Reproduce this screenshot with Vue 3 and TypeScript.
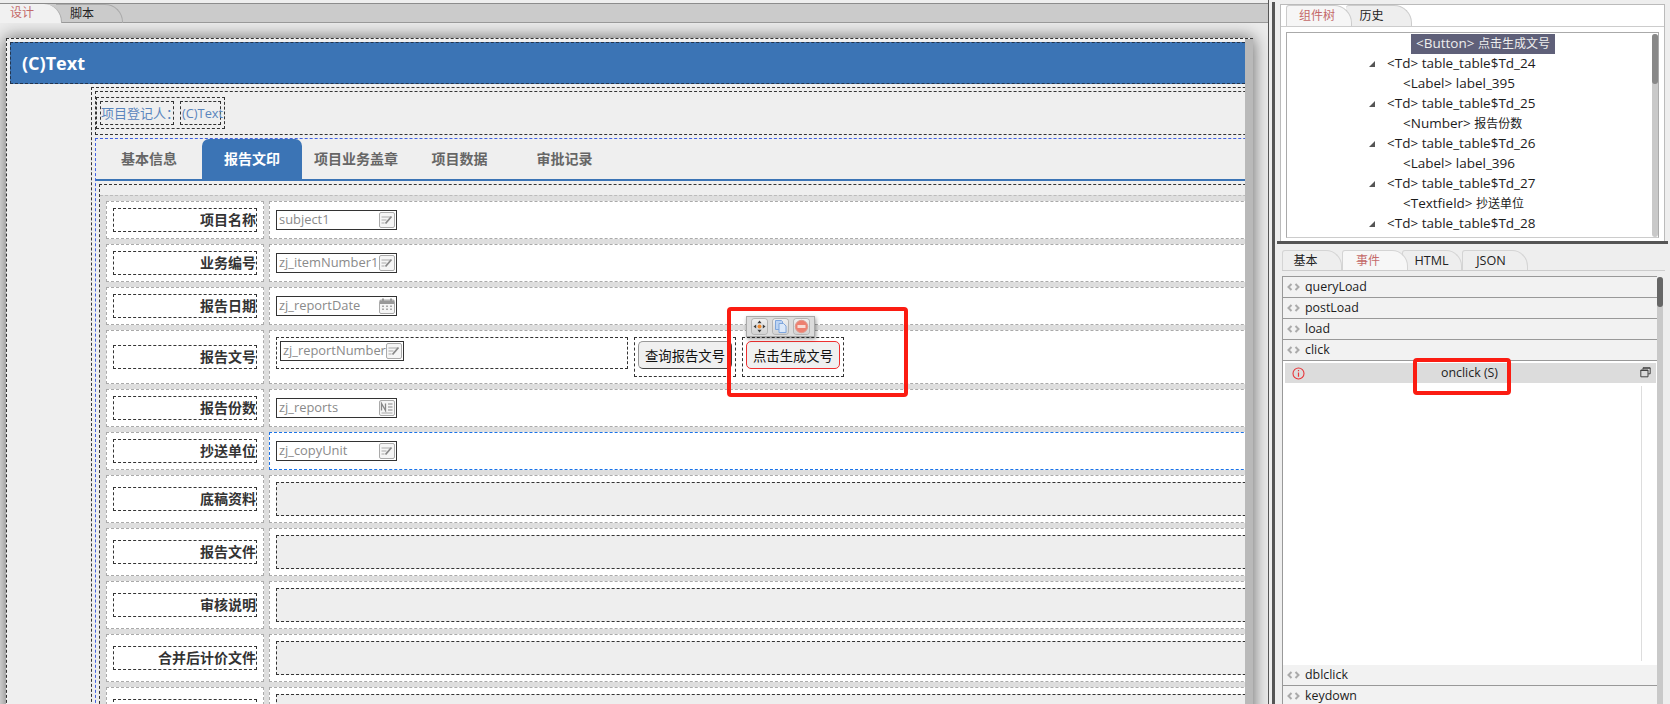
<script setup lang="ts">
type Row = {
  label: string
  size: 'std' | 'tall' | 'area'
  kind: 'input' | 'report' | 'area'
  field?: string
  icon?: 'edit' | 'date' | 'num'
  focus?: boolean
}
const rows: Row[] = [
  { label: '项目名称', size: 'std', kind: 'input', field: 'subject1', icon: 'edit' },
  { label: '业务编号', size: 'std', kind: 'input', field: 'zj_itemNumber1', icon: 'edit' },
  { label: '报告日期', size: 'std', kind: 'input', field: 'zj_reportDate', icon: 'date' },
  { label: '报告文号', size: 'tall', kind: 'report', field: 'zj_reportNumber', icon: 'edit' },
  { label: '报告份数', size: 'std', kind: 'input', field: 'zj_reports', icon: 'num' },
  { label: '抄送单位', size: 'std', kind: 'input', field: 'zj_copyUnit', icon: 'edit', focus: true },
  { label: '底稿资料', size: 'area', kind: 'area' },
  { label: '报告文件', size: 'area', kind: 'area' },
  { label: '审核说明', size: 'area', kind: 'area' },
  { label: '合并后计价文件', size: 'area', kind: 'area' },
  { label: '', size: 'area', kind: 'area' }
]
const navTabs = [
  { text: '基本信息', cls: 'n1' },
  { text: '报告文印', cls: 'n2 on' },
  { text: '项目业务盖章', cls: 'n3' },
  { text: '项目数据', cls: 'n4' },
  { text: '审批记录', cls: 'n5' }
]
const tree = [
  { tag: '<Td>', name: 'table_table$Td_24', td: true, cjk: false },
  { tag: '<Label>', name: 'label_395', td: false, cjk: false },
  { tag: '<Td>', name: 'table_table$Td_25', td: true, cjk: false },
  { tag: '<Number>', name: '报告份数', td: false, cjk: true },
  { tag: '<Td>', name: 'table_table$Td_26', td: true, cjk: false },
  { tag: '<Label>', name: 'label_396', td: false, cjk: false },
  { tag: '<Td>', name: 'table_table$Td_27', td: true, cjk: false },
  { tag: '<Textfield>', name: '抄送单位', td: false, cjk: true },
  { tag: '<Td>', name: 'table_table$Td_28', td: true, cjk: false }
]
const eventsTop = ['queryLoad', 'postLoad', 'load', 'click']
const eventsBottom = ['dblclick', 'keydown']
</script>

<template>
  <div class="root">
    <section class="left">
      <div class="strip">
        <div class="stab s1">设计</div>
        <div class="stab s2">脚本</div>
      </div>
      <div class="stage">
        <div class="canvas">
          <div class="content">
            <div class="head">(C)Text</div>
            <div class="outer">
              <div class="meta">
                <div class="meta-in">
                  <span class="meta-a">项目登记人：</span>
                  <span class="meta-b">(C)Text</span>
                </div>
              </div>
              <div class="tabsbox">
                <div class="nav">
                  <div v-for="t in navTabs" :key="t.text" class="nav-t" :class="t.cls">{{ t.text }}</div>
                </div>
                <div class="tablewrap">
                  <div class="grid">
                    <template v-for="(r, i) in rows" :key="i">
                      <div class="cell lab" :class="r.size">
                        <div class="lab-box">{{ r.label }}</div>
                      </div>
                      <div class="cell val" :class="[r.size, r.kind, { focus: r.focus }]">
                        <div v-if="r.kind === 'input'" class="inp">
                          <span>{{ r.field }}</span>
                          <svg class="ic" viewBox="0 0 16 16">
                            <template v-if="r.icon === 'edit'">
                              <rect x=".5" y=".5" width="15" height="15" rx="1.5" fill="#f5f5f5" stroke="#aaa" />
                              <path d="M2.5 5h9M2.5 8h5M2.5 11h3" stroke="#aaa" stroke-width="1.2" fill="none" />
                              <path d="M6.5 11.5 12.5 4.5" stroke="#888" stroke-width="1.8" fill="none" />
                            </template>
                            <template v-else-if="r.icon === 'date'">
                              <rect x=".5" y="2" width="15" height="13.5" rx="1.5" fill="#f5f5f5" stroke="#aaa" />
                              <rect x="1" y="2.5" width="14" height="3.5" fill="#999" />
                              <path d="M4 .5v3M12 .5v3" stroke="#999" stroke-width="2" />
                              <path d="M3 7.5h2v1.5H3zM7 7.5h2v1.5H7zM11 7.5h2v1.5h-2zM3 10.5h2V12H3zM7 10.5h2V12H7zM11 10.5h2V12h-2z" fill="#aaa" />
                            </template>
                            <template v-else>
                              <rect x=".5" y=".5" width="15" height="15" rx="1.5" fill="#f5f5f5" stroke="#aaa" />
                              <path d="M2.5 10.5v-7l4 7v-7" stroke="#888" stroke-width="1.3" fill="none" />
                              <path d="M9 4h4.5M9 7h4.5M9 10h4.5" stroke="#888" stroke-width="1.2" fill="none" />
                              <path d="M2.5 13h11" stroke="#aaa" fill="none" />
                            </template>
                          </svg>
                        </div>
                        <template v-else-if="r.kind === 'report'">
                          <div class="rep-field">
                            <div class="inp inner">
                              <span>{{ r.field }}</span>
                              <svg class="ic" viewBox="0 0 16 16">
                                <rect x=".5" y=".5" width="15" height="15" rx="1.5" fill="#f5f5f5" stroke="#aaa" />
                                <path d="M2.5 5h9M2.5 8h5M2.5 11h3" stroke="#aaa" stroke-width="1.2" fill="none" />
                                <path d="M6.5 11.5 12.5 4.5" stroke="#888" stroke-width="1.8" fill="none" />
                              </svg>
                            </div>
                          </div>
                          <div class="btn-wrap q"><button class="btn">查询报告文号</button></div>
                          <div class="btn-wrap"><button class="btn red">点击生成文号</button></div>
                        </template>
                        <div v-else class="area-box"></div>
                      </div>
                    </template>
                  </div>
                </div>
              </div>
            </div>
          </div>
          <div class="canvas-bar"></div>
        </div>
      </div>
      <div class="tools">
        <span class="tool">
          <svg viewBox="0 0 15 15">
            <path d="M7.5 1.5 9.6 4.2H5.4zM7.5 13.5 5.4 10.8h4.2zM1.5 7.5 4.2 5.4v4.2zM13.5 7.5 10.8 9.6V5.4z" fill="#3c3c3c" />
            <circle cx="7.5" cy="7.5" r="2" fill="#ef8a2e" />
          </svg>
        </span>
        <span class="tool">
          <svg viewBox="0 0 15 15">
            <path d="M2.5 1.5h6l1 1v8h-7z" fill="#bcd3f2" stroke="#7fa6dd" />
            <path d="M6 4.5h4.5l2.5 2.5v6.5H6z" fill="#dbe8f9" stroke="#7fa6dd" />
          </svg>
        </span>
        <span class="tool">
          <svg viewBox="0 0 15 15">
            <circle cx="7.5" cy="7.5" r="6.2" fill="#ee8070" stroke="#e09a8e" />
            <rect x="3.5" y="6" width="8" height="3" fill="#f8dcd5" />
          </svg>
        </span>
      </div>
      <div class="mark m1"></div>
    </section>

    <div class="rule"></div>

    <section class="right">
      <div class="p-top">
        <div class="pt-tabs">
          <div class="pt t1 on">组件树</div>
          <div class="pt t2">历史</div>
        </div>
        <div class="tree">
          <div class="tree-list">
            <div class="tree-row sel"><span>&lt;Button&gt; <em>点击生成文号</em></span></div>
            <div v-for="t in tree" :key="t.name" class="tree-row" :class="t.td ? 'td' : 'kid'">
              <svg v-if="t.td" class="tri" viewBox="0 0 6 6"><path d="M0 6 6 0v6z" fill="#555" /></svg>
              <span>{{ t.tag }} <em v-if="t.cjk">{{ t.name }}</em><template v-else>{{ t.name }}</template></span>
            </div>
          </div>
          <div class="sb tree-sb"><i></i></div>
        </div>
      </div>
      <div class="bar"></div>
      <div class="p-low">
        <div class="pl-tabs">
          <div class="pl b1">基本</div>
          <div class="pl b2 on">事件</div>
          <div class="pl b3">HTML</div>
          <div class="pl b4">JSON</div>
        </div>
        <div class="ev-wrap">
          <div class="ev-list">
            <div v-for="e in eventsTop" :key="e" class="ev">
              <svg class="chev" viewBox="0 0 13 8"><path d="M4.5 1 1.5 4l3 3M8.5 1l3 3-3 3" stroke="#aaa" stroke-width="2" fill="none" /></svg>
              <span>{{ e }}</span>
            </div>
            <div class="ev-open">
              <div class="ev-head">
                <svg class="info" viewBox="0 0 13 13">
                  <circle cx="6.5" cy="6.5" r="5.5" fill="none" stroke="#e8363a" stroke-width="1.1" />
                  <path d="M6.5 3v1.2M6.5 5.4v4.4" stroke="#e8363a" stroke-width="1.2" />
                </svg>
                <span>onclick (S)</span>
                <svg class="restore" viewBox="0 0 11 11">
                  <path d="M3 2.5V.8h7.2v6H8.2M.8 3h7.2v6.8H.8z" fill="none" stroke="#444" />
                  <path d="M.8 3.5h7.2M3 1.2h7.2" stroke="#444" />
                </svg>
              </div>
              <div class="ev-body"><div class="ev-line"></div></div>
            </div>
            <div v-for="e in eventsBottom" :key="e" class="ev">
              <svg class="chev" viewBox="0 0 13 8"><path d="M4.5 1 1.5 4l3 3M8.5 1l3 3-3 3" stroke="#aaa" stroke-width="2" fill="none" /></svg>
              <span>{{ e }}</span>
            </div>
          </div>
          <div class="sb ev-sb"><i></i></div>
        </div>
      </div>
      <div class="mark m2"></div>
    </section>
  </div>
</template>

<style>
html, body { margin: 0; padding: 0; overflow: hidden; }
</style>

<style scoped>
.root {
  position: relative;
  display: flex;
  width: 1670px;
  height: 704px;
  overflow: hidden;
  background: #eeeeee;
  font-family: "Open Sans", "Noto Sans CJK SC", sans-serif;
  font-size: 13px;
  color: #222;
}
em { font-style: normal; font-size: 12px; }
.left {
  width: 1268px;
  flex: none;
  display: flex;
  flex-direction: column;
  overflow: hidden;
  border-right: 1px solid #555;
}
.strip {
  flex: none;
  margin-top: 3px;
  height: 20px;
  border-top: 1px solid #8c8c8c;
  border-bottom: 1px solid #999;
  background: #cbcbcb;
  display: flex;
  box-sizing: border-box;
}
.stab {
  height: 19px;
  box-sizing: border-box;
  font-size: 12px;
  line-height: 18px;
  border-top-right-radius: 18px;
}
.s1 {
  width: 62px;
  padding-left: 10px;
  color: #c46a6a;
  background: #f1f1f1;
  border-right: 1px solid #aaa;
  position: relative;
  z-index: 1;
}
.s2 {
  width: 67px;
  margin-left: -6px;
  padding-left: 14px;
  border-right: 1px solid #aaa;
  border-top: 1px solid #aaa;
}
.stage {
  flex: 1;
  min-height: 0;
  padding: 15px 0 0 6px;
  background: #ececec;
  overflow: hidden;
}
.canvas {
  width: 1247px;
  height: 700px;
  box-sizing: border-box;
  display: flex;
  background: #efefef;
  border-top: 1px dashed #333;
  border-left: 1px dashed #333;
  box-shadow: 0 0 16px rgba(0, 0, 0, 0.6);
}
.content {
  width: 1238px;
  flex: none;
  padding: 3px 0 0 3px;
  box-sizing: border-box;
  overflow: hidden;
}
.canvas-bar {
  width: 8px;
  flex: none;
  background: #b9b9b9;
}
.head {
  width: 1240px;
  height: 42px;
  box-sizing: border-box;
  background: #3b74b5;
  border: 1px dashed #22344d;
  color: #fff;
  font-weight: 700;
  font-size: 18px;
  line-height: 41px;
  padding-left: 11px;
}
.outer {
  margin: 3px 0 0 81px;
  width: 1300px;
  border: 1px dashed #333;
  border-right: none;
  padding: 3px 0 0 3px;
  box-sizing: border-box;
  height: 640px;
}
.meta {
  height: 44px;
  box-sizing: border-box;
  border: 1px dashed #333;
  border-right: none;
  padding: 5px 0 0 0;
  margin-bottom: 3px;
}
.meta-in {
  width: 129px;
  height: 32px;
  box-sizing: border-box;
  border: 1px dashed #333;
  padding: 3px 0 0 3px;
  display: flex;
  gap: 6px;
  align-items: flex-start;
}
.meta-a, .meta-b {
  height: 24px;
  flex: none;
  box-sizing: border-box;
  border: 1px dashed #333;
  color: #5a85bd;
  font-size: 13px;
  line-height: 22px;
  white-space: nowrap;
}
.meta-a { width: 74px; }
.meta-b { width: 41px; padding-left: 1px; font-size: 12.8px; }
.tabsbox {
  border: 1px dashed #3f5fe0;
  border-right: none;
  border-bottom: none;
  box-sizing: border-box;
  height: 600px;
}
.nav {
  height: 42px;
  box-sizing: border-box;
  display: flex;
  border-bottom: 2px solid #3b74b5;
}
.nav-t {
  height: 40px;
  text-align: center;
  line-height: 38px;
  font-size: 14px;
  font-weight: 700;
  color: #666;
  font-family: "Noto Sans CJK SC", sans-serif;
  box-sizing: border-box;
}
.n1 { width: 106px; }
.n2 { width: 100px; }
.n3 { width: 108px; }
.n4 { width: 99px; }
.n5 { width: 111px; }
.nav-t.on {
  background: #3b74b5;
  color: #fff;
  border-radius: 7px 7px 0 0;
}
.tablewrap {
  margin: 3px 0 0 3px;
  border: 1px dashed #333;
  border-right: none;
  border-bottom: none;
  padding-top: 10px;
  box-sizing: border-box;
  height: 540px;
}
.grid {
  border-top: 1px dashed #bbb;
  background: #dedede;
  padding: 5px 0 0 6px;
  display: grid;
  grid-template-columns: 158px 1100px;
  column-gap: 5px;
  row-gap: 5px;
  align-content: start;
  height: 530px;
  box-sizing: border-box;
}
.cell {
  background: #fff;
  border: 1px dashed #aaa;
  box-sizing: border-box;
  display: flex;
  align-items: center;
}
.std { height: 38px; }
.tall { height: 54px; }
.area { height: 48px; }
.cell.focus { border-color: #1a73e8; }
.lab { padding-left: 6px; }
.lab-box {
  width: 144px;
  height: 24px;
  box-sizing: border-box;
  border: 1px dashed #333;
  text-align: right;
  font-size: 14px;
  font-weight: 700;
  line-height: 20px;
  color: #333;
  font-family: "Noto Sans CJK SC", sans-serif;
}
.val { padding-left: 6px; }
.inp {
  width: 121px;
  height: 20px;
  box-sizing: border-box;
  border: 1px solid #333;
  display: flex;
  align-items: center;
  justify-content: space-between;
  padding: 0 1px 0 2px;
  color: #8a8a8a;
  font-size: 12.9px;
  white-space: nowrap;
  background: #fff;
}
.inp span { padding-bottom: 2px; }
.ic { width: 16px; height: 16px; flex: none; }
.cell.report { align-items: flex-start; padding-top: 6px; }
.rep-field {
  width: 352px;
  height: 32px;
  box-sizing: border-box;
  border: 1px dashed #333;
  padding: 3px 0 0 3px;
  flex: none;
}
.inp.inner { width: 124px; }
.btn-wrap {
  width: 102px;
  height: 40px;
  box-sizing: border-box;
  border: 1px dashed #333;
  padding: 3px;
  flex: none;
  margin-left: 6px;
}
.btn {
  display: block;
  width: 94px;
  height: 28px;
  padding: 0;
  box-sizing: border-box;
  background: #f0f0f0;
  border: 1px solid #999;
  border-right-color: #444;
  border-bottom-color: #444;
  border-radius: 5px;
  font-family: "Noto Sans CJK SC", sans-serif;
  font-size: 13.33px;
  color: #111;
}
.btn.red { border: 1px solid #ee3030; }
.area-box {
  width: 1090px;
  height: 34px;
  box-sizing: border-box;
  border: 1px dashed #333;
  background: #eeeeee;
}
.tools {
  position: absolute;
  left: 746px;
  top: 316px;
  width: 69px;
  height: 21px;
  box-sizing: border-box;
  background: #dcdcdc;
  border: 1px solid #aaa;
  box-shadow: 1px 2px 4px rgba(0, 0, 0, 0.4);
  display: flex;
  align-items: center;
  padding-left: 5px;
  gap: 6px;
}
.tool {
  width: 15px;
  height: 15px;
  display: block;
  background: linear-gradient(#f0f0f0, #d2d2d2);
  border-radius: 3px;
  box-shadow: 0 0 0 1px #b4b4b4;
}
.tool svg { display: block; width: 15px; height: 15px; }
.mark {
  position: absolute;
  box-sizing: border-box;
  border: 4px solid #fb1c12;
  border-radius: 4px;
  pointer-events: none;
}
.m1 { left: 727px; top: 307px; width: 181px; height: 90px; }
.m2 { left: 1413px; top: 358px; width: 98px; height: 37px; }
.rule {
  width: 3px;
  flex: none;
  margin: 2px 0 0 3px;
  background: #555;
}
.right {
  margin-left: 4px;
  width: 391px;
  flex: none;
  display: flex;
  flex-direction: column;
}
.p-top {
  margin: 4px 5px 0 1px;
  height: 237px;
  flex: none;
  box-sizing: border-box;
  background: #fff;
  border: 1px solid #bbb;
  border-bottom: none;
  padding: 0 5px 0 5px;
}
.pt-tabs {
  display: flex;
  height: 21px;
  margin: 0 -5px;
  padding-left: 5px;
  border-bottom: 1px solid #ccc;
  box-sizing: content-box;
}
.pt {
  height: 21px;
  box-sizing: border-box;
  border: 1px solid #ccc;
  border-bottom: none;
  border-radius: 3px 18px 0 0;
  background: #eeeeee;
  font-size: 12px;
  line-height: 20px;
  text-align: center;
}
.t1 { width: 66px; background: #f6f6f6; color: #c46a6a; position: relative; z-index: 1; padding-right: 4px; }
.t2 { width: 66px; margin-left: -6px; padding-right: 14px; border-left: none; }
.tree {
  margin-top: 5px;
  height: 206px;
  box-sizing: border-box;
  border: 1px solid #aaa;
  border-bottom: 1px solid #ccc;
  display: flex;
  padding-top: 1px;
  overflow: hidden;
}
.tree-list { flex: 1; min-width: 0; }
.tree-row {
  height: 20px;
  line-height: 18px;
  display: flex;
  align-items: flex-start;
  white-space: nowrap;
  font-size: 13.5px;
  color: #1c1c1c;
}
.tree-row.sel { padding-left: 124px; }
.tree-row.sel span {
  background: #5f6079;
  color: #eee;
  padding: 0 5px;
  height: 20px;
}
.tree-row.td { padding-left: 82px; }
.tree-row.kid { padding-left: 116px; }
.tri { width: 6px; height: 6px; margin: 7px 12px 0 0; flex: none; }
.sb {
  width: 6px;
  flex: none;
  background: #c9c9c9;
  border-radius: 3px;
}
.sb i { display: block; width: 6px; border-radius: 3px; background: #666; }
.tree-sb i { height: 50px; background: #888; }
.bar {
  flex: none;
  height: 3px;
  margin: 0 2px 0 -2px;
  background: #555;
}
.p-low {
  flex: 1;
  min-height: 0;
  padding: 6px 5px 0 3px;
  display: flex;
  flex-direction: column;
  background: #eeeeee;
}
.pl-tabs {
  display: flex;
  height: 21px;
  flex: none;
  border-bottom: 1px solid #ccc;
  box-sizing: border-box;
}
.pl {
  height: 20px;
  box-sizing: border-box;
  border: 1px solid #d4d4d4;
  border-bottom: none;
  border-radius: 3px 16px 0 0;
  font-size: 12px;
  line-height: 20px;
  text-align: center;
}
.b1 { width: 60px; padding-right: 13px; }
.b2 { width: 66px; margin-right: -6px; background: #f7f7f7; color: #c46a6a; position: relative; z-index: 1; padding-right: 14px; }
.b3 { width: 60px; padding-right: 1px; font-size: 12.6px; }
.b4 { width: 66px; padding-right: 8px; font-size: 12.6px; }
.ev-wrap {
  margin-top: 5px;
  flex: 1;
  min-height: 0;
  display: flex;
  align-items: stretch;
}
.ev-list {
  width: 375px;
  flex: none;
  box-sizing: border-box;
  border-top: 1px solid #999;
  border-left: 1px solid #999;
  display: flex;
  flex-direction: column;
  background: #f2f2f2;
}
.ev {
  height: 21px;
  flex: none;
  box-sizing: border-box;
  border-bottom: 1px solid #999;
  display: flex;
  align-items: center;
  font-size: 12.4px;
  color: #1c1c1c;
  line-height: 18px;
}
.chev { width: 13px; height: 8px; margin: 0 5px 0 4px; flex: none; }
.ev-open {
  flex: none;
  height: 304px;
  background: #fff;
  padding-top: 2px;
  box-sizing: border-box;
}
.ev-head {
  height: 20px;
  margin: 0 1px 0 2px;
  background: #dcdcdc;
  display: flex;
  align-items: center;
  position: relative;
  justify-content: center;
  padding-right: 2px;
  font-size: 12.4px;
  line-height: 18px;
}
.info { position: absolute; left: 7px; top: 4px; width: 13px; height: 13px; }
.restore { position: absolute; right: 5px; top: 4px; width: 11px; height: 11px; }
.ev-body { padding: 3px 0 0 358px; height: 278px; box-sizing: border-box; }
.ev-line { width: 0; height: 275px; border-left: 1px solid #ddd; }
.ev-sb { height: 470px; margin-top: 1px; }
.ev-sb i { height: 30px; }
</style>
